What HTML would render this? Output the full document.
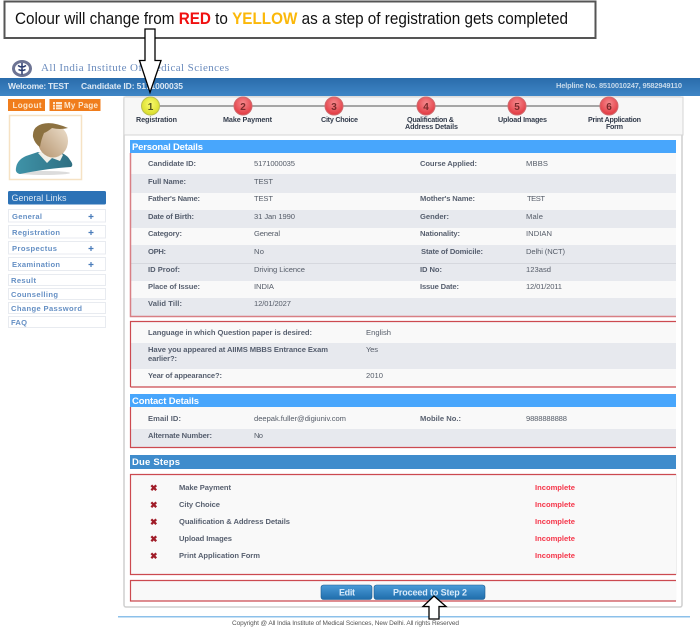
<!DOCTYPE html>
<html><head><meta charset="utf-8"><title>Registration</title>
<style>
html,body{margin:0;padding:0;background:#fff;width:700px;height:641px;overflow:hidden}
svg{display:block;font-family:"Liberation Sans",sans-serif;filter:blur(.35px)}
.l{font-size:7.6px;fill:#3c4658;font-weight:bold;opacity:.85}
.v{font-size:7.6px;fill:#555c68}
.s{font-size:7.2px;fill:#333c4c;font-weight:bold}
.m{font-size:7.6px;fill:#4a7cba;font-weight:bold;opacity:.85}
.h{font-size:9.5px;fill:#fff;font-weight:bold}
.i{font-size:7.6px;fill:#f5364a;font-weight:bold}
.n{font-size:10px;fill:#7a2a2a;font-weight:bold}
.x{font-size:9px;fill:#a01c28;font-weight:bold}
</style></head><body>
<svg width="700" height="641" viewBox="0 0 700 641" xmlns="http://www.w3.org/2000/svg">
<defs>
<linearGradient id="hd" x1="0" y1="0" x2="0" y2="1"><stop offset="0" stop-color="#2a6cab"/><stop offset="1" stop-color="#3f86c6"/></linearGradient>
<linearGradient id="bt" x1="0" y1="0" x2="0" y2="1"><stop offset="0" stop-color="#4a9bd8"/><stop offset="1" stop-color="#1f6dab"/></linearGradient>
<radialGradient id="r" cx=".5" cy=".35" r=".65"><stop offset="0" stop-color="#f58a8e"/><stop offset="1" stop-color="#e2373f"/></radialGradient>
<radialGradient id="y" cx=".5" cy=".4" r=".6"><stop offset="0" stop-color="#fbfb70"/><stop offset="1" stop-color="#d8dc28"/></radialGradient>
<linearGradient id="sh" x1="0" y1="0" x2="1" y2="0"><stop offset="0" stop-color="#3f93a8"/><stop offset="1" stop-color="#2f6f82"/></linearGradient>
<linearGradient id="fc" x1="1" y1="0" x2="0" y2="1"><stop offset="0" stop-color="#efe2d0"/><stop offset="1" stop-color="#b3926c"/></linearGradient>
</defs>

<!-- logo -->
<ellipse cx="22" cy="68.500" rx="8.500" ry="7" fill="#fff" stroke="#6d7494" stroke-width="3"/><path d="M22 63v11.500M18 65.500q4 3 8 0M18.500 69.500q3.500 2 7 0" stroke="#2c3c70" stroke-width="1.500" fill="none"/>
<text x="41" y="71" font-size="11" fill="#6a8bbd" textLength="188" style="font-family:'Liberation Serif',serif">All India Institute Of Medical Sciences</text>

<!-- header -->
<rect x="0" y="78" width="700" height="18" fill="url(#hd)"/>
<text x="8" y="89" font-size="8.500" font-weight="bold" fill="#dce8f4" textLength="61">Welcome: TEST</text>
<text x="81" y="89" font-size="8.500" font-weight="bold" fill="#dce8f4" textLength="102">Candidate ID: 5171000035</text>
<text x="556" y="88" font-size="7.500" font-weight="bold" fill="#c4d8ea" textLength="126">Helpline No. 8510010247, 9582949110</text>

<!-- left column -->
<rect x="8" y="99" width="37" height="12" fill="#f07d1c"/>
<text x="12.500" y="108" font-size="8" font-weight="bold" fill="#fde6cc" textLength="29">Logout</text>
<rect x="49.500" y="99" width="51" height="12" fill="#f07d1c"/>
<path d="M53 102h2v2h-2zM53 104.700h2v2h-2zM53 107.400h2v2h-2zM56 102h6v2h-6zM56 104.700h6v2h-6zM56 107.400h6v2h-6z" fill="#fde6cc"/>
<text x="64" y="108" font-size="8" font-weight="bold" fill="#fde6cc" textLength="34">My Page</text>
<rect x="9.500" y="115.500" width="72" height="64" fill="#fff" stroke="#f6e2c4" stroke-width="1.500"/>
<ellipse cx="44" cy="173" rx="26" ry="2" fill="#dcdcdc"/>
<path d="M16 168Q17 160 26 156L38 152L62 153Q68 156 70 160Q74 165 71 167Q50 168 20 174Q15 173 16 168Z" fill="url(#sh)"/>
<path d="M38 153L47 163L52 158L60 161L63 155L60 152L52 156L42 151Z" fill="#f0efe8"/>
<ellipse cx="53" cy="141" rx="15" ry="16.500" fill="url(#fc)"/>
<path d="M33 137Q32 127 42 124Q52 121 68 128Q60 130 52 128Q47 132 44 133Q41 140 40 147Q35 144 33 137Z" fill="#8c7140"/>
<rect x="8" y="191" width="98" height="13.500" rx="1.500" fill="#2c72b6"/>
<text x="11.500" y="201" font-size="9" fill="#d8e6f4" textLength="55">General Links</text>
<g fill="#fff" stroke="#e8ebf0">
<rect x="8.500" y="209.500" width="97" height="12.500"/><rect x="8.500" y="225.500" width="97" height="12.500"/><rect x="8.500" y="241.500" width="97" height="12.500"/><rect x="8.500" y="257.500" width="97" height="13"/>
<rect x="8.500" y="274.500" width="97" height="11"/><rect x="8.500" y="288.500" width="97" height="11"/><rect x="8.500" y="302.500" width="97" height="11"/><rect x="8.500" y="316.500" width="97" height="11"/>
</g>
<text class="m" x="12" y="219" textLength="30">General</text><text class="m" x="12" y="235" textLength="48">Registration</text><text class="m" x="12" y="251" textLength="45">Prospectus</text><text class="m" x="12" y="267" textLength="48">Examination</text>
<path d="M88.500 216.500h5M91 214v5M88.500 232.500h5M91 230v5M88.500 248.500h5M91 246v5M88.500 264.500h5M91 262v5" stroke="#4a7cba" stroke-width="1.200"/>
<text class="m" x="11" y="283" textLength="25">Result</text><text class="m" x="11" y="297" textLength="47">Counselling</text><text class="m" x="11" y="311" textLength="71">Change Password</text><text class="m" x="11" y="325" textLength="16">FAQ</text>

<!-- main panel -->
<rect x="124" y="97" width="558" height="510" rx="2" fill="#fff" stroke="#cfcfcf" stroke-width="1.500"/>
<rect x="124" y="97" width="559" height="38" fill="#f7f7f7" stroke="#d4d4d4"/>
<path d="M150 106H609" stroke="#555" stroke-width="1"/>
<g stroke="#b9bd50" stroke-width="1"><circle cx="150.500" cy="106" r="9" fill="url(#y)"/></g>
<g stroke="#cf6a6e" stroke-width="1" fill="url(#r)"><circle cx="243" cy="106" r="9"/><circle cx="334" cy="106" r="9"/><circle cx="426" cy="106" r="9"/><circle cx="517" cy="106" r="9"/><circle cx="609" cy="106" r="9"/></g>
<g text-anchor="middle"><text class="n" style="fill:#555520" x="150.500" y="110">1</text><text class="n" x="243" y="110">2</text><text class="n" x="334" y="110">3</text><text class="n" x="426" y="110">4</text><text class="n" x="517" y="110">5</text><text class="n" x="609" y="110">6</text></g>
<text class="s" x="136" y="122" textLength="41">Registration</text><text class="s" x="223" y="122" textLength="49">Make Payment</text><text class="s" x="321" y="122" textLength="37">City Choice</text>
<text class="s" x="407" y="122" textLength="47">Qualification &amp;</text><text class="s" x="405" y="129" textLength="53">Address Details</text>
<text class="s" x="498" y="122" textLength="49">Upload Images</text><text class="s" x="588" y="122" textLength="53">Print Application</text><text class="s" x="606" y="129" textLength="17">Form</text>

<!-- personal -->
<rect x="130" y="140" width="546" height="13" fill="#48a6fc"/>
<text class="h" x="132" y="150" textLength="71">Personal Details</text>
<rect x="130" y="153" width="546" height="163" fill="#f9f9f9"/>
<g fill="#e7e9ee"><rect x="131" y="174" width="545" height="19"/><rect x="131" y="210" width="545" height="18"/><rect x="131" y="245" width="545" height="36"/><rect x="131" y="298" width="545" height="18"/></g>
<path d="M131 263.500H676" stroke="#d6d8de"/>
<path d="M130.500 153V316.500H676" fill="none" stroke="#d87f84" stroke-width="1.500"/>
<text class="l" x="148" y="166" textLength="48">Candidate ID:</text><text class="v" x="254" y="166" textLength="41">5171000035</text><text class="l" x="420" y="166" textLength="57">Course Applied:</text><text class="v" x="526" y="166" textLength="22">MBBS</text>
<text class="l" x="148" y="184" textLength="38">Full Name:</text><text class="v" x="254" y="184" textLength="19">TEST</text>
<text class="l" x="148" y="201" textLength="52">Father's Name:</text><text class="v" x="254" y="201" textLength="19">TEST</text><text class="l" x="420" y="201" textLength="55">Mother's Name:</text><text class="v" x="527" y="201" textLength="18">TEST</text>
<text class="l" x="148" y="219" textLength="46">Date of Birth:</text><text class="v" x="254" y="219" textLength="41">31 Jan 1990</text><text class="l" x="420" y="219" textLength="29">Gender:</text><text class="v" x="526" y="219" textLength="17">Male</text>
<text class="l" x="148" y="236" textLength="34">Category:</text><text class="v" x="254" y="236" textLength="26">General</text><text class="l" x="420" y="236" textLength="40">Nationality:</text><text class="v" x="526" y="236" textLength="26">INDIAN</text>
<text class="l" x="148" y="254" textLength="18">OPH:</text><text class="v" x="254" y="254" textLength="10">No</text><text class="l" x="421" y="254" textLength="62">State of Domicile:</text><text class="v" x="526" y="254" textLength="39">Delhi (NCT)</text>
<text class="l" x="148" y="272" textLength="32">ID Proof:</text><text class="v" x="254" y="272" textLength="51">Driving Licence</text><text class="l" x="420" y="272" textLength="22">ID No:</text><text class="v" x="526" y="272" textLength="25">123asd</text>
<text class="l" x="148" y="289" textLength="52">Place of Issue:</text><text class="v" x="254" y="289" textLength="20">INDIA</text><text class="l" x="420" y="289" textLength="39">Issue Date:</text><text class="v" x="526" y="289" textLength="36">12/01/2011</text>
<text class="l" x="148" y="306" textLength="34">Valid Till:</text><text class="v" x="254" y="306" textLength="37">12/01/2027</text>

<!-- language box -->
<rect x="130" y="322" width="546" height="65" fill="#f9f9f9"/>
<rect x="131" y="343" width="545" height="26" fill="#e7e9ee"/>
<path d="M130.500 387V321.500H676M130.500 387H676" fill="none" stroke="#cc4a50" stroke-width="1.200"/>
<text class="l" x="148" y="335" textLength="164">Language in which Question paper is desired:</text><text class="v" x="366" y="335" textLength="25">English</text>
<text class="l" x="148" y="352" textLength="180">Have you appeared at AIIMS MBBS Entrance Exam</text><text class="l" x="148" y="361" textLength="29">earlier?:</text><text class="v" x="366" y="352" textLength="12">Yes</text>
<text class="l" x="148" y="378" textLength="74">Year of appearance?:</text><text class="v" x="366" y="378" textLength="17">2010</text>

<!-- contact -->
<rect x="130" y="394" width="546" height="13" fill="#48a6fc"/>
<text class="h" x="132" y="404" textLength="67">Contact Details</text>
<rect x="130" y="407" width="546" height="40" fill="#f9f9f9"/>
<rect x="131" y="429" width="545" height="18" fill="#e7e9ee"/>
<path d="M130.500 407V447.500H676" fill="none" stroke="#cc4a50" stroke-width="1.200"/>
<text class="l" x="148" y="421" textLength="33">Email ID:</text><text class="v" x="254" y="421" textLength="92">deepak.fuller@digiuniv.com</text><text class="l" x="420" y="421" textLength="41">Mobile No.:</text><text class="v" x="526" y="421" textLength="41">9888888888</text>
<text class="l" x="148" y="438" textLength="64">Alternate Number:</text><text class="v" x="254" y="438" textLength="9">No</text>

<!-- due -->
<rect x="130" y="455" width="546" height="14" fill="#3f8ccc"/>
<text class="h" x="132" y="465" textLength="48">Due Steps</text>
<rect x="130.500" y="474.500" width="546" height="100" fill="#f9f9f9" stroke="#eeeeee" stroke-width="1"/>
<path d="M676 474.500H130.500V574.500H676" fill="none" stroke="#cc4a50" stroke-width="1.200"/>
<text class="x" x="150" y="491">✖</text><text class="x" x="150" y="508">✖</text><text class="x" x="150" y="525">✖</text><text class="x" x="150" y="542">✖</text><text class="x" x="150" y="559">✖</text>
<text class="l" x="179" y="490" textLength="52">Make Payment</text><text class="i" x="535" y="490" textLength="40">Incomplete</text>
<text class="l" x="179" y="507" textLength="41">City Choice</text><text class="i" x="535" y="507" textLength="40">Incomplete</text>
<text class="l" x="179" y="524" textLength="111">Qualification &amp; Address Details</text><text class="i" x="535" y="524" textLength="40">Incomplete</text>
<text class="l" x="179" y="541" textLength="53">Upload Images</text><text class="i" x="535" y="541" textLength="40">Incomplete</text>
<text class="l" x="179" y="558" textLength="81">Print Application Form</text><text class="i" x="535" y="558" textLength="40">Incomplete</text>

<!-- buttons -->
<rect x="130.500" y="580.500" width="546" height="21" fill="#f9f9f9"/>
<path d="M676 580.500H130.500V601H676" fill="none" stroke="#cc4a50" stroke-width="1.200"/>
<rect x="321" y="585" width="51" height="14.500" rx="2.500" fill="url(#bt)" stroke="#1b5b8f" stroke-width=".6"/>
<text x="339" y="595.500" font-size="9" fill="#d8eafa" font-weight="bold" textLength="16">Edit</text>
<rect x="374" y="585" width="111" height="14.500" rx="2.500" fill="url(#bt)" stroke="#1b5b8f" stroke-width=".6"/>
<text x="393" y="595.500" font-size="9" fill="#d8eafa" font-weight="bold" textLength="74">Proceed to Step 2</text>

<!-- footer -->
<rect x="118" y="616" width="572" height="1.500" fill="#8cc0ea"/>
<text x="232" y="625" font-size="6.500" fill="#555" textLength="227">Copyright @ All India Institute of Medical Sciences, New Delhi. All rights Reserved</text>

<!-- up arrow -->
<path d="M434 596L446 606.500H439V619H429V606.500H423Z" fill="#fff" stroke="#000" stroke-width="1.300"/>

<!-- callout -->
<rect x="4.500" y="1.500" width="591" height="36.500" fill="#fff" stroke="#555" stroke-width="2"/>
<text x="15" y="24" font-size="17" fill="#111" textLength="553" lengthAdjust="spacingAndGlyphs">Colour will change from <tspan fill="#f01010" font-weight="bold">RED</tspan> to <tspan fill="#fbb80a" font-weight="bold">YELLOW</tspan> as a step of registration gets completed</text>

<!-- down arrow -->
<path d="M145 29H155V60.500H161L150 92.500L139.500 60.500H145Z" fill="#fff" stroke="#000" stroke-width="1.300"/>
</svg>
</body></html>
